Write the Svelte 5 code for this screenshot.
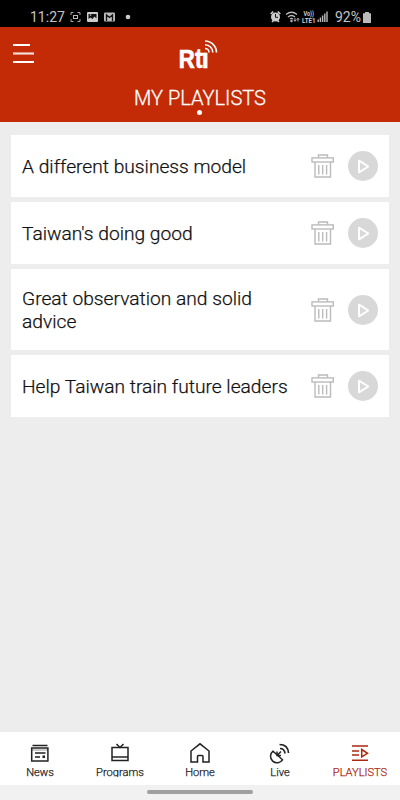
<script lang="ts">
	const playlists = [
		'A different business model',
		"Taiwan's doing good",
		'Great observation and solid advice',
		'Help Taiwan train future leaders'
	]

	const tabs = ['News', 'Programs', 'Home', 'Live', 'PLAYLISTS']
	let active = $state('PLAYLISTS')
</script>

<div class="screen">
	<div class="status">
		<span class="clock">11:27</span>
		<svg class="left-icons" width="62" height="12" viewBox="0 0 62 12">
			<path d="M1 4V1.500h2.5M7.500 1.500H10V4M10 8v2.500H7.500M3.500 10.500H1V8" fill="none" stroke="#aaa" />
			<rect x="3.500" y="4.500" width="4" height="3" fill="none" stroke="#bbb" />
			<rect x="17" y="1" width="11" height="10" rx="1" fill="#ccc" />
			<path d="M18.500 8V3h8v4.500l-2-2-2 2.500-2-1.500z" fill="#111" />
			<circle cx="20.500" cy="4" r="0.800" fill="#ccc" />
			<rect x="34" y="1.500" width="11" height="9" rx="1" fill="#bbb" />
			<path d="M36.500 10V4l3 2.500 3-2.500v6" fill="none" stroke="#111" stroke-width="1.300" />
			<circle cx="58" cy="6" r="2.300" fill="#ccc" />
		</svg>
		<svg class="right-icons" width="60" height="14" viewBox="0 0 60 14">
			<circle cx="5.500" cy="7" r="4.500" fill="#ccc" />
			<path d="M0.700 4 3.200 1.500M10.300 4 7.800 1.500M2 12l1.500-1.500M9 12l-1.500-1.500" stroke="#ccc" stroke-width="1.600" />
			<path d="M5.500 4v3.300H8" fill="none" stroke="#111" />
			<g fill="none" stroke="#bbb" stroke-width="1.300">
				<path d="M16 4.500q5.500-4.500 11 0M18 7q3.500-3 7 0M20 9q1.500-1.200 3 0" />
			</g>
			<circle cx="21.500" cy="11" r="1.200" fill="#bbb" />
			<path d="M25 8v3m-1.200-1.200L25 11.300l1.200-1.500M28 11.500v-3m-1.200 1.200L28 8.200l1.200 1.500" fill="none" stroke="#bbb" stroke-width="0.900" />
			<text x="33.500" y="6" textLength="10.500" lengthAdjust="spacingAndGlyphs">Vo))</text>
			<text x="32" y="12.500" textLength="13.500" lengthAdjust="spacingAndGlyphs">LTE1</text>
			<g fill="#bbb">
				<rect x="47.500" y="9.500" width="1.400" height="2.500" />
				<rect x="49.700" y="7.500" width="1.400" height="4.500" />
				<rect x="51.900" y="5.500" width="1.400" height="6.500" />
				<rect x="54.100" y="3.500" width="1.400" height="8.500" />
				<rect x="56.300" y="1.500" width="1.400" height="10.500" />
			</g>
		</svg>
		<span class="percent">92%</span>
		<svg class="battery" width="8" height="11" viewBox="0 0 8 11">
			<path d="M2 0h4v1.200h2V11H0V1.200h2z" fill="#bbb" />
		</svg>
	</div>

	<header>
		<button class="menu" aria-label="Menu">
			<svg width="22" height="20" viewBox="0 0 22 20">
				<path d="M0 1h17M0 18h21" stroke="#fff" stroke-width="1.900" />
				<path d="M0 9.500h21" stroke="#fff" stroke-opacity="0.850" stroke-width="2.200" />
			</svg>
		</button>
		<svg class="logo" width="44" height="32" viewBox="0 0 44 32" role="img" aria-label="Rti">
			<text y="27.700"><tspan x="0.800" textLength="16" lengthAdjust="spacingAndGlyphs">R</tspan><tspan class="small" x="17" textLength="7.500" lengthAdjust="spacingAndGlyphs">t</tspan><tspan class="small" x="23.800" textLength="7" lengthAdjust="spacingAndGlyphs">ı</tspan></text>
			<path d="M17 14.200h11" stroke="#fff" stroke-width="2.600" />
			<g fill="none" stroke="#fff" stroke-width="1.600">
				<path d="M27 8.500a4 4 0 0 1 4 4M27 4.700a7.800 7.800 0 0 1 7.800 7.800M27 1a11.500 11.500 0 0 1 11.500 11.500" />
			</g>
		</svg>
		<h1>MY PLAYLISTS</h1>
		<span class="dot"></span>
	</header>

	<main>
		{#each playlists as title}
			<article>
				<h2>{title}</h2>
				<button class="trash" aria-label="Delete">
					<svg width="24" height="26" viewBox="0 0 24 26" fill="none" stroke="#bbb" stroke-width="1.400">
						<path d="M7.500 4.700V2h9v2.700M4 9v15h15.500V9" />
						<rect x="1" y="4.900" width="21.300" height="4.100" />
						<path d="M7.800 12v9.500M11.700 12v9.500M15.600 12v9.500" />
					</svg>
				</button>
				<button class="play" aria-label="Play">
					<svg width="30" height="30" viewBox="0 0 30 30">
						<circle cx="15" cy="15" r="15" fill="#d8d8d8" />
						<path d="M11 9.700v11.600L20.300 15.500z" fill="none" stroke="#fff" stroke-width="2" stroke-linejoin="round" />
					</svg>
				</button>
			</article>
		{/each}
	</main>

	<nav>
		{#each tabs as tab}
			<button class="tab" class:active={tab === active} onclick={() => (active = tab)}>
				<svg width="22" height="22" viewBox="0 0 22 22" fill="none" stroke="currentColor" stroke-width="1.500">
					{#if tab === 'News'}
						<path d="M3.500 3.500h15" />
						<rect x="2.700" y="6" width="16.200" height="13" />
						<path d="M3 8h16" stroke-opacity="0.300" />
						<path d="M6 11h10.500M6 15h5" />
						<rect x="13.500" y="13.500" width="2.500" height="2.500" fill="currentColor" stroke="none" />
					{:else if tab === 'Programs'}
						<path d="m7.500 2 3.500 3.500L14.500 2" />
						<rect x="3" y="5.500" width="16" height="13" />
						<path d="M3 15h16" />
					{:else if tab === 'Home'}
						<path d="M2 20V9l9-7.200L20 9v11h-6v-5.500q0-1-1-1H9.500q-1 0-1 1V20z" />
					{:else if tab === 'Live'}
						<path d="M4 9.200A6.500 6.500 0 1 0 13.500 17.800z" />
						<path d="m8.500 13 3.500-3.500M8 9.500v4h4" />
						<path d="M11 6.500q4.500 0 5 5M10.500 2.500q8.500 0 9 8.500" stroke-width="1.700" />
					{:else}
						<path d="M3 4h16M3 9h7M3 13h7M3 18.300h16" />
						<path d="M12.700 7.500v7.500l5.800-3.700z" />
					{/if}
				</svg>
				<span>{tab}</span>
			</button>
		{/each}
	</nav>

	<div class="gesture"><span></span></div>
</div>

<style>
	:global(body) {
		margin: 0;
	}

	.screen {
		display: flex;
		flex-direction: column;
		width: 400px;
		height: 800px;
		overflow: hidden;
		background: #ededed;
		font-family: Roboto, 'Liberation Sans', sans-serif;
	}

	button {
		display: flex;
		padding: 0;
		border: 0;
		background: none;
		font: inherit;
		color: inherit;
	}

	svg {
		display: block;
	}

	.status {
		display: flex;
		align-items: center;
		box-sizing: border-box;
		height: 27px;
		padding: 7px 29.5px 0 30px;
		background: #000;
		color: #c4c4c4;
		font-size: 14px;
		line-height: 20px;
	}

	.clock {
		width: 40px;
	}

	.right-icons {
		margin-left: auto;
	}

	.right-icons text {
		fill: #ccc;
		font-size: 6.5px;
		font-weight: 700;
	}

	.percent {
		margin: 0 1.5px 0 5px;
	}

	header {
		display: grid;
		grid-template-columns: 1fr 44px 1fr;
		grid-template-rows: 45px 30px 1fr;
		height: 95px;
		background: #c32b07;
		color: #fff;
	}

	.menu {
		align-self: start;
		margin: 17px 0 0 13px;
	}

	.logo {
		margin-top: 13px;
		overflow: visible;
	}

	.logo text {
		fill: #fff;
		font-family: 'Liberation Sans', sans-serif;
		font-size: 25px;
		font-weight: 700;
		stroke: #fff;
		stroke-width: 0.7px;
	}

	.logo .small {
		font-size: 28px;
	}

	h1 {
		grid-column: 1 / -1;
		margin: 14px 0 0;
		font-size: 20px;
		font-weight: 300;
		line-height: 24px;
		text-align: center;
		-webkit-text-stroke: 0.3px currentColor;
	}

	.dot {
		grid-column: 2;
		width: 5px;
		height: 5px;
		margin: 8px 0 0 19px;
		border-radius: 50%;
		background: #fff;
	}

	main {
		display: flex;
		flex: 1;
		flex-direction: column;
		gap: 5px;
		padding: 13px 11px 0;
	}

	article {
		display: flex;
		align-items: center;
		box-sizing: border-box;
		padding: 16px 11px;
		background: #fff;
	}

	h2 {
		flex: 1;
		margin: 1.5px 0;
		padding-right: 16px;
		color: #111;
		font-size: 19.2px;
		font-weight: 300;
		line-height: 23px;
		-webkit-text-stroke: 0.25px currentColor;
	}

	.play {
		margin-left: 13px;
	}

	nav {
		display: grid;
		grid-template-columns: repeat(5, 1fr);
		height: 53px;
		background: #fff;
		color: #222;
	}

	.tab {
		flex-direction: column;
		align-items: center;
		padding-top: 10px;
		font-size: 11.1px;
		font-weight: 300;
		-webkit-text-stroke: 0.25px currentColor;
	}

	.tab span {
		height: 11px;
		margin-top: 2px;
		overflow: hidden;
		line-height: 14px;
	}

	.active {
		color: #ad2810;
	}

	.gesture {
		display: flex;
		justify-content: center;
		height: 15px;
		background: #f1f1f1;
	}

	.gesture span {
		width: 106px;
		height: 4px;
		margin-top: 5px;
		border-radius: 2px;
		background: #a0a0a0;
	}
</style>
